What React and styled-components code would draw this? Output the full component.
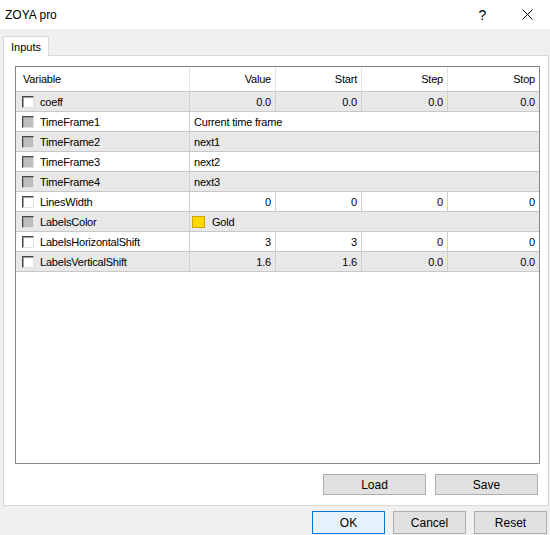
import styled, { createGlobalStyle } from "styled-components"

const GlobalStyle = createGlobalStyle`
    body {
        margin: 0;
        font-family: "Liberation Sans", Arial, sans-serif;
        color: #000;
    }
`

const colunas = "174px 86px 86px 86px 1fr"

const parametros = [
    { nome: "coeff", tipo: "num", valores: ["0.0", "0.0", "0.0", "0.0"] },
    { nome: "TimeFrame1", tipo: "texto", desativado: true, texto: "Current time frame" },
    { nome: "TimeFrame2", tipo: "texto", desativado: true, texto: "next1" },
    { nome: "TimeFrame3", tipo: "texto", desativado: true, texto: "next2" },
    { nome: "TimeFrame4", tipo: "texto", desativado: true, texto: "next3" },
    { nome: "LinesWidth", tipo: "num", valores: ["0", "0", "0", "0"] },
    { nome: "LabelsColor", tipo: "cor", desativado: true, texto: "Gold", cor: "#ffd700" },
    { nome: "LabelsHorizontalShift", tipo: "num", valores: ["3", "3", "0", "0"] },
    { nome: "LabelsVerticalShift", tipo: "num", valores: ["1.6", "1.6", "0.0", "0.0"] },
]

const Janela = styled.div`
    width: 550px;
    height: 535px;
    background: #f0f0f0;
    display: flex;
    flex-direction: column;
    overflow: hidden;
`

const BarraTitulo = styled.div`
    height: 29px;
    background: #fff;
    display: flex;
    align-items: center;
    justify-content: space-between;
    padding-left: 5px;
`

const Titulo = styled.span`
    font-size: 12px;
`

const BotoesTitulo = styled.div`
    display: flex;
    height: 100%;
`

const BotaoTitulo = styled.div`
    width: 45px;
    height: 100%;
    display: flex;
    align-items: center;
    justify-content: center;
    font-size: 14px;
`

const Conteudo = styled.div`
    padding: 7px 0 0 3px;
`

const Abas = styled.div`
    display: flex;
`

const Aba = styled.div`
    height: 19px;
    padding: 0 7px;
    background: #fff;
    border: 1px solid #d9d9d9;
    border-bottom: none;
    font-size: 11px;
    display: flex;
    align-items: center;
    margin-bottom: -1px;
    position: relative;
    z-index: 1;
`

const Painel = styled.div`
    box-sizing: border-box;
    width: 546px;
    height: 451px;
    background: #fff;
    border: 1px solid #d9d9d9;
    padding: 10px 8px 0 11px;
`

const Grade = styled.div`
    box-sizing: border-box;
    height: 398px;
    border: 1px solid #828790;
    background: #fff;
    font-size: 11px;
    letter-spacing: -0.2px;
`

const LinhaCabecalho = styled.div`
    display: grid;
    grid-template-columns: ${colunas};
    height: 24px;
    border-bottom: 1px solid #c8c8c8;
`

const Linha = styled.div`
    display: grid;
    grid-template-columns: ${colunas};
    height: 19px;
    border-bottom: 1px solid #c8c8c8;
    background: ${props => props.$cinza ? "#e8e8e8" : "#fff"};
`

const Celula = styled.div`
    display: flex;
    align-items: center;
    justify-content: ${props => props.$direita ? "flex-end" : "flex-start"};
    padding: ${props => props.$direita ? "0 4px 0 0" : "0 0 0 4px"};
    border-right: 1px solid ${props => props.$cabecalho ? "#e5e5e5" : "#d0d0d0"};
    white-space: nowrap;
    overflow: hidden;
    grid-column: ${props => props.$largo ? "2 / -1" : "auto"};

    &:last-child {
        border-right: none;
    }
`

const CelulaNome = styled(Celula)`
    padding-left: 6px;
    gap: 6px;
`

const Caixa = styled.span`
    box-sizing: border-box;
    width: 12px;
    height: 12px;
    flex: none;
    border: 1px solid;
    border-color: #444 #e0e0e0 #e0e0e0 #444;
    background: ${props => props.$desativado ? "#bdbdbd" : "#fff"};
    box-shadow: inset 1px 1px 0 ${props => props.$desativado ? "#9a9a9a" : "#a0a0a0"};
`

const Amostra = styled.span`
    box-sizing: border-box;
    width: 13px;
    height: 12px;
    background: ${props => props.$cor};
    border: 1px solid #c9a800;
    margin: 0 7px 0 -2px;
`

const LinhaBotoes = styled.div`
    display: flex;
    justify-content: flex-end;
    gap: ${props => props.$gap}px;
    margin-top: ${props => props.$topo}px;
    padding-right: ${props => props.$direita}px;
`

const Botao = styled.button`
    box-sizing: border-box;
    width: ${props => props.$largura}px;
    height: ${props => props.$altura}px;
    background: ${props => props.$principal ? "#e5f1fb" : "#e1e1e1"};
    border: 1px solid ${props => props.$principal ? "#0078d7" : "#adadad"};
    font-family: "Liberation Sans", Arial, sans-serif;
    font-size: 12px;
    color: #000;
    padding: 0;
`

function App() {
    return (
        <>
            <GlobalStyle />
            <Janela>
                <BarraTitulo>
                    <Titulo>ZOYA pro</Titulo>
                    <BotoesTitulo>
                        <BotaoTitulo>?</BotaoTitulo>
                        <BotaoTitulo>
                            <svg width="11" height="11" viewBox="0 0 11 11">
                                <path d="M0.5 0.5 L10.5 10.5 M10.5 0.5 L0.5 10.5" stroke="#000" strokeWidth="1" />
                            </svg>
                        </BotaoTitulo>
                    </BotoesTitulo>
                </BarraTitulo>
                <Conteudo>
                    <Abas>
                        <Aba>Inputs</Aba>
                    </Abas>
                    <Painel>
                        <Grade>
                            <LinhaCabecalho>
                                <Celula $cabecalho style={{ paddingLeft: 7 }}>Variable</Celula>
                                <Celula $cabecalho $direita>Value</Celula>
                                <Celula $cabecalho $direita>Start</Celula>
                                <Celula $cabecalho $direita>Step</Celula>
                                <Celula $cabecalho $direita>Stop</Celula>
                            </LinhaCabecalho>
                            {parametros.map((p, i) =>
                                <Linha key={p.nome} $cinza={i % 2 === 0}>
                                    <CelulaNome>
                                        <Caixa $desativado={p.desativado} />
                                        {p.nome}
                                    </CelulaNome>
                                    {p.tipo === "num" && p.valores.map((v, j) =>
                                        <Celula key={p.nome + "-" + j} $direita>{v}</Celula>
                                    )}
                                    {p.tipo === "texto" &&
                                        <Celula $largo>{p.texto}</Celula>
                                    }
                                    {p.tipo === "cor" &&
                                        <Celula $largo>
                                            <Amostra $cor={p.cor} />
                                            {p.texto}
                                        </Celula>
                                    }
                                </Linha>
                            )}
                        </Grade>
                        <LinhaBotoes $gap={9} $topo={10} $direita={2}>
                            <Botao $largura={103} $altura={21}>Load</Botao>
                            <Botao $largura={103} $altura={21}>Save</Botao>
                        </LinhaBotoes>
                    </Painel>
                    <LinhaBotoes $gap={8} $topo={5} $direita={3}>
                        <Botao $principal $largura={73} $altura={23}>OK</Botao>
                        <Botao $largura={73} $altura={23}>Cancel</Botao>
                        <Botao $largura={73} $altura={23}>Reset</Botao>
                    </LinhaBotoes>
                </Conteudo>
            </Janela>
        </>
    )
}

export default App
